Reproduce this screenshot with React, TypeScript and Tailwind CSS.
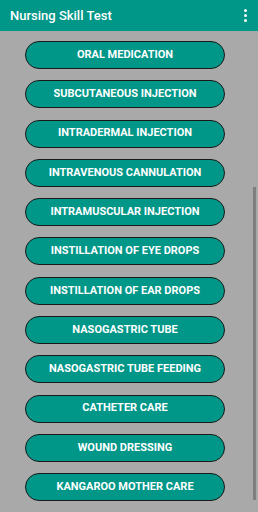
const skills = [
  "ORAL MEDICATION",
  "SUBCUTANEOUS INJECTION",
  "INTRADERMAL INJECTION",
  "INTRAVENOUS CANNULATION",
  "INTRAMUSCULAR INJECTION",
  "INSTILLATION OF EYE DROPS",
  "INSTILLATION OF EAR DROPS",
  "NASOGASTRIC TUBE",
  "NASOGASTRIC TUBE FEEDING",
  "CATHETER CARE",
  "WOUND DRESSING",
  "KANGAROO MOTHER CARE",
];

export default function App() {
  return (
    <div className="relative flex h-[512px] w-[258px] flex-col overflow-hidden bg-[#a9a9a9] font-['Roboto',sans-serif]">
      {/* app bar */}
      <header className="flex h-[31px] shrink-0 items-center justify-between bg-[#009688] pl-[10px] pr-[11px]">
        <h1 className="text-[13px] font-medium text-white">Nursing Skill Test</h1>
        <div className="flex flex-col gap-[2px]">
          <span className="h-[3px] w-[3px] rounded-full bg-white" />
          <span className="h-[3px] w-[3px] rounded-full bg-white" />
          <span className="h-[3px] w-[3px] rounded-full bg-white" />
        </div>
      </header>

      {/* list of skills */}
      <main className="flex flex-col gap-[11.3px] pl-[25px] pt-[10px]">
        {skills.map((skill) => (
          <button
            key={skill}
            className="flex h-[28px] w-[200px] shrink-0 items-center justify-center rounded-full border border-[#1a1a1a] bg-[#009688] text-[11px] font-bold text-white"
          >
            {skill}
          </button>
        ))}
      </main>

      {/* scrollbar */}
      <div className="absolute right-[2px] top-[187px] h-[313px] w-[3px] bg-[#7f7f7f]" />
    </div>
  );
}
